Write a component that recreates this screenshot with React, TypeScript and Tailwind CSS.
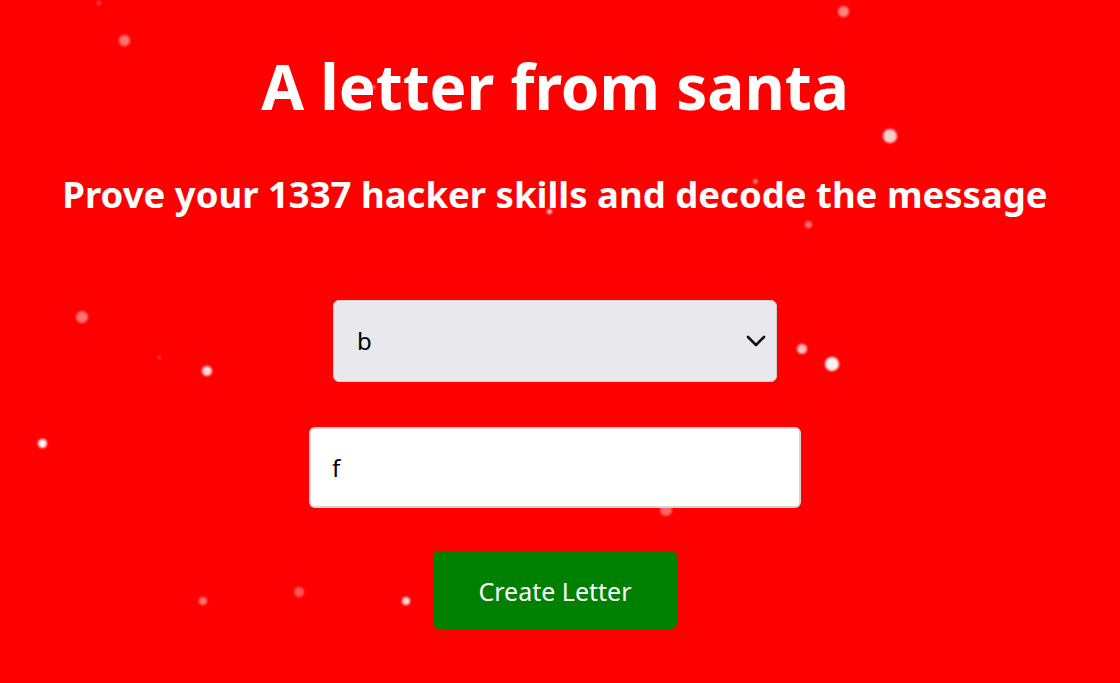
import React, { useState } from 'react';

const flakes = [
  { x: 99, y: 3, s: 4, o: 0.35 },
  { x: 124, y: 40, s: 11, o: 0.45 },
  { x: 843, y: 11, s: 11, o: 0.5 },
  { x: 374, y: 87, s: 4, o: 0.4 },
  { x: 890, y: 136, s: 14, o: 0.8 },
  { x: 755, y: 181, s: 5, o: 0.45 },
  { x: 549, y: 211, s: 5, o: 0.8 },
  { x: 808, y: 224, s: 7, o: 0.45 },
  { x: 82, y: 317, s: 12, o: 0.45 },
  { x: 159, y: 357, s: 3, o: 0.4 },
  { x: 207, y: 371, s: 10, o: 0.85 },
  { x: 687, y: 330, s: 4, o: 0.6 },
  { x: 802, y: 349, s: 10, o: 0.75 },
  { x: 832, y: 364, s: 14, o: 0.95 },
  { x: 42, y: 443, s: 9, o: 0.95 },
  { x: 666, y: 510, s: 12, o: 0.4 },
  { x: 203, y: 601, s: 8, o: 0.45 },
  { x: 299, y: 592, s: 10, o: 0.35 },
  { x: 406, y: 601, s: 8, o: 0.85 },
];

export default function App() {
  const [choice, setChoice] = useState('b');
  const [text, setText] = useState('f');

  return (
    <div
      className="relative min-h-[683px] w-full overflow-hidden bg-[#ff0000] text-white"
      style={{ fontFamily: '"Noto Sans", "Open Sans", sans-serif' }}
    >
      {flakes.map((f, i) => (
        <div
          key={i}
          className="pointer-events-none absolute rounded-full bg-white blur-[1px]"
          style={{ left: f.x - f.s / 2, top: f.y - f.s / 2, width: f.s, height: f.s, opacity: f.o }}
        />
      ))}

      <div className="relative flex flex-col items-center pr-[10px] pt-[42px]">
        <h1 className="text-[62px] font-bold leading-[88px]">A letter from santa</h1>
        <h2 className="mt-[39px] text-[36.5px] font-bold leading-[50px]">
          Prove your 1337 hacker skills and decode the message
        </h2>

        <div className="relative mt-[81px] w-[444px]">
          <select
            value={choice}
            onChange={(e) => setChoice(e.target.value)}
            className="h-[82px] w-full appearance-none rounded-md border border-[#cfcfd4] bg-[#e8e8ed] pl-[23px] text-[24px] text-black outline-none"
            style={{ fontFamily: '"Noto Sans", sans-serif' }}
          >
            <option value="a">a</option>
            <option value="b">b</option>
            <option value="c">c</option>
          </select>
          <svg
            className="pointer-events-none absolute right-[11px] top-[35px]"
            width="20"
            height="12"
            viewBox="0 0 20 12"
            fill="none"
          >
            <path d="M2 2l8 8 8-8" stroke="#111" strokeWidth="2.6" strokeLinecap="round" strokeLinejoin="round" />
          </svg>
        </div>

        <input
          value={text}
          onChange={(e) => setText(e.target.value)}
          className="mt-[45px] h-[81px] w-[492px] rounded-md border-2 border-[#d6d6d6] bg-white px-[21px] text-[24px] text-black outline-none"
          style={{ fontFamily: '"Noto Sans", sans-serif' }}
        />

        <button className="mt-[43px] h-[78px] w-[244px] rounded-md bg-[#008000] pt-[4px] text-[25px] text-white">
          Create Letter
        </button>
      </div>
    </div>
  );
}
